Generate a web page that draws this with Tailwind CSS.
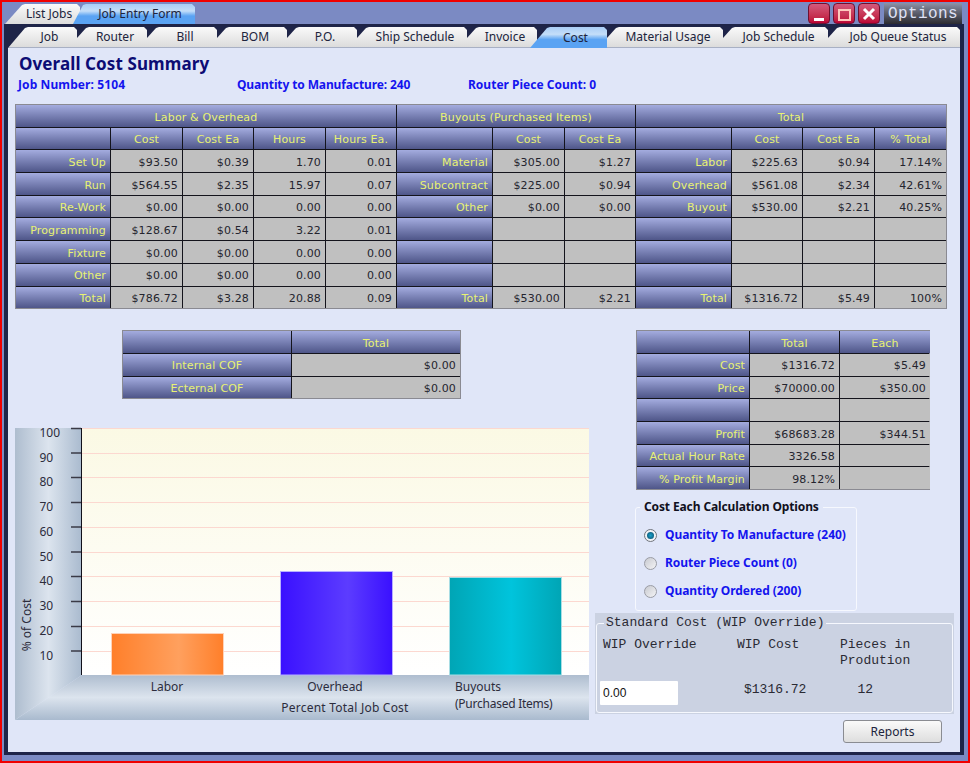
<!DOCTYPE html>
<html lang="en">
<head>
  <meta charset="UTF-8" />
  <title>Overall Cost Summary</title>
  <script src="https://cdn.jsdelivr.net/npm/@tailwindcss/browser@4"></script>
</head>
<body class="w-[970px] h-[763px] overflow-hidden border-2 border-[#f00000] bg-[#7b8ac3] font-['Noto_Sans',sans-serif] text-[12px]">

  <!-- Top bar -->
  <div class="h-[22px] flex items-end pl-[3px] pr-[6px]">
    <div class="w-[75px] h-[20px] flex items-center justify-center pl-[13px] text-[#20243c] bg-linear-to-b from-[#fafafa] to-[#dcdcdc] [clip-path:polygon(0_100%,17px_1px,20px_0,calc(100%-3px)_0,100%_3px,100%_100%)]">List Jobs</div>
    <div class="w-[122px] h-[20px] -ml-[7px] flex items-center justify-center pl-[12px] text-[#20243c] bg-[linear-gradient(#a9cdf6_0,#c4def9_35%,#5aa3f3_60%,#5aa3f3_100%)] [clip-path:polygon(0_100%,10px_1px,13px_0,calc(100%-3px)_0,100%_3px,100%_100%)]">Job Entry Form</div>
    <div class="ml-auto flex items-start gap-[3px] h-[22px] pt-[1px]">
      <button class="w-[22px] h-[21px] rounded-[4px] border border-[#6e1030] bg-linear-to-b from-[#d4587c] to-[#bc0036] flex items-end justify-center pb-[2px]"><span class="block w-[10px] h-[3px] bg-[#fff]"></span></button>
      <button class="w-[22px] h-[21px] rounded-[4px] border border-[#6e1030] bg-linear-to-b from-[#d4587c] to-[#bc0036] flex items-center justify-center"><span class="block w-[13px] h-[12px] mt-[3px] border-2 border-[#ffc9bd]"></span></button>
      <button class="w-[22px] h-[21px] rounded-[4px] border border-[#6e1030] bg-linear-to-b from-[#d4587c] to-[#bc0036] flex items-center justify-center">
        <svg width="14" height="14" viewBox="0 0 14 14"><path d="M2 2 L12 12 M12 2 L2 12" stroke="#fff" stroke-width="3" fill="none" /></svg>
      </button>
      <div class="w-[78px] h-[21px] ml-[1px] flex items-center justify-center bg-linear-to-b from-[#8d92a8] to-[#2c2c32] text-[#dfe2f6] font-['Liberation_Mono',monospace] text-[16px] tracking-[0.4px]">Options</div>
    </div>
  </div>

  <!-- Frame -->
  <div class="ml-[2px] w-[960px] h-[731px] bg-[#1e2448] pt-[3px] px-[4px] pb-[3px]">

    <!-- Tabs -->
    <div class="flex h-[21px] text-[#20243c]">
      <div class="w-[69px] flex items-center justify-center pl-[14px] bg-linear-to-b from-[#fafafa] to-[#dcdcdc] border-b border-[#a8b0c4] [clip-path:polygon(0_100%,17px_1px,20px_0,calc(100%-3px)_0,100%_3px,100%_100%)]">Job</div>
      <div class="w-[70px] flex items-center justify-center pl-[6px] bg-linear-to-b from-[#fafafa] to-[#dcdcdc] border-b border-[#a8b0c4] [clip-path:polygon(0_100%,0_11px,9px_1px,12px_0,calc(100%-3px)_0,100%_3px,100%_100%)]">Router</div>
      <div class="w-[70px] flex items-center justify-center pl-[6px] bg-linear-to-b from-[#fafafa] to-[#dcdcdc] border-b border-[#a8b0c4] [clip-path:polygon(0_100%,0_11px,9px_1px,12px_0,calc(100%-3px)_0,100%_3px,100%_100%)]">Bill</div>
      <div class="w-[70px] flex items-center justify-center pl-[6px] bg-linear-to-b from-[#fafafa] to-[#dcdcdc] border-b border-[#a8b0c4] [clip-path:polygon(0_100%,0_11px,9px_1px,12px_0,calc(100%-3px)_0,100%_3px,100%_100%)]">BOM</div>
      <div class="w-[70px] flex items-center justify-center pl-[6px] bg-linear-to-b from-[#fafafa] to-[#dcdcdc] border-b border-[#a8b0c4] [clip-path:polygon(0_100%,0_11px,9px_1px,12px_0,calc(100%-3px)_0,100%_3px,100%_100%)]">P.O.</div>
      <div class="w-[110px] flex items-center justify-center pl-[6px] bg-linear-to-b from-[#fafafa] to-[#dcdcdc] border-b border-[#a8b0c4] [clip-path:polygon(0_100%,0_11px,9px_1px,12px_0,calc(100%-3px)_0,100%_3px,100%_100%)]">Ship Schedule</div>
      <div class="w-[70px] flex items-center justify-center pl-[6px] bg-linear-to-b from-[#fafafa] to-[#dcdcdc] border-b border-[#a8b0c4] [clip-path:polygon(0_100%,0_11px,9px_1px,12px_0,calc(100%-3px)_0,100%_3px,100%_100%)]">Invoice</div>
      <div class="w-[77px] -ml-[7px] flex items-center justify-center pl-[14px] bg-[linear-gradient(#a9cdf6_0,#c4def9_35%,#5aa3f3_60%,#5aa3f3_100%)] [clip-path:polygon(0_100%,17px_1px,20px_0,calc(100%-3px)_0,100%_3px,100%_100%)]">Cost</div>
      <div class="w-[116px] flex items-center justify-center pl-[6px] bg-linear-to-b from-[#fafafa] to-[#dcdcdc] border-b border-[#a8b0c4] [clip-path:polygon(0_100%,0_11px,9px_1px,12px_0,calc(100%-3px)_0,100%_3px,100%_100%)]">Material Usage</div>
      <div class="w-[105px] flex items-center justify-center pl-[6px] bg-linear-to-b from-[#fafafa] to-[#dcdcdc] border-b border-[#a8b0c4] [clip-path:polygon(0_100%,0_11px,9px_1px,12px_0,calc(100%-3px)_0,100%_3px,100%_100%)]">Job Schedule</div>
      <div class="w-[132px] flex items-center justify-center pl-[8px] bg-linear-to-b from-[#fafafa] to-[#dcdcdc] border-b border-[#a8b0c4] [clip-path:polygon(0_100%,0_11px,9px_1px,12px_0,calc(100%-3px)_0,100%_3px,100%_100%)]">Job Queue Status</div>
    </div>

    <!-- Content -->
    <div class="h-[704px] bg-[#e0e6f8] pl-[7px] pt-[4px]">
      <h1 class="ml-[4px] text-[17px] leading-[24px] font-bold tracking-[0.1px] text-[#0c0c74]">Overall Cost Summary</h1>
      <div class="ml-[3px] mt-[1px] flex leading-[16px] font-bold text-[#1414ee]">
        <span class="w-[219px] tracking-[0.1px]">Job Number: 5104</span>
        <span class="w-[231px] tracking-[-0.12px]">Quantity to Manufacture: 240</span>
        <span>Router Piece Count: 0</span>
      </div>

      <!-- Cost breakdown -->
      <div id="mainGrid" class="mt-[11px] w-[932px] border border-[#8a8a92] bg-[#14141c] grid gap-px grid-cols-[94px_71px_70px_71px_70px_95px_71px_70px_95px_70px_71px_71px] grid-rows-[repeat(9,21.7px)] font-['DejaVu_Sans',sans-serif] text-[11px] tracking-[0.15px]"></div>

      <div class="flex mt-[21px]">
        <div class="w-[574px]">
          <!-- COF -->
          <div id="cofGrid" class="ml-[107px] w-[339px] border border-[#8a8a92] bg-[#14141c] grid gap-px grid-cols-[168px_168px] grid-rows-[repeat(3,21.7px)] font-['DejaVu_Sans',sans-serif] text-[11px] tracking-[0.15px]"></div>

          <!-- Chart -->
          <svg class="mt-[29px] block overflow-visible" width="574" height="292" viewBox="0 0 574 292">
            <defs>
              <linearGradient id="wall" x1="0" x2="1" y1="0" y2="0">
                <stop offset="0" stop-color="#aebdcf" /><stop offset="0.5" stop-color="#dce4ee" /><stop offset="1" stop-color="#a9bace" />
              </linearGradient>
              <linearGradient id="floor" x1="0" x2="0" y1="0" y2="1">
                <stop offset="0" stop-color="#aebdcf" /><stop offset="0.5" stop-color="#dce4ee" /><stop offset="1" stop-color="#a9bace" />
              </linearGradient>
              <linearGradient id="plot" x1="0" x2="0" y1="0" y2="1">
                <stop offset="0" stop-color="#fbf9e4" /><stop offset="1" stop-color="#ffffff" />
              </linearGradient>
              <linearGradient id="orange" x1="0" x2="1" y1="0" y2="0">
                <stop offset="0" stop-color="#ff7f2a" /><stop offset="0.6" stop-color="#ffa05e" /><stop offset="1" stop-color="#ff7f2a" />
              </linearGradient>
              <linearGradient id="purple" x1="0" x2="1" y1="0" y2="0">
                <stop offset="0" stop-color="#3a10ff" /><stop offset="0.6" stop-color="#5c3cff" /><stop offset="1" stop-color="#3a10ff" />
              </linearGradient>
              <linearGradient id="teal" x1="0" x2="1" y1="0" y2="0">
                <stop offset="0" stop-color="#00a5b5" /><stop offset="0.55" stop-color="#00c4dc" /><stop offset="1" stop-color="#00a5b5" />
              </linearGradient>
            </defs>
            <polygon points="0,292 67,247 574,247 574,292" fill="url(#floor)" />
            <polygon points="0,0 67,0 67,247 0,292" fill="url(#wall)" />
            <rect x="67" y="0" width="507" height="247" fill="url(#plot)" />
            <g stroke="#fcd8d0" stroke-width="1">
              <line x1="67" x2="574" y1="0.5" y2="0.5" /><line x1="67" x2="574" y1="25.5" y2="25.5" />
              <line x1="67" x2="574" y1="49.5" y2="49.5" /><line x1="67" x2="574" y1="74.5" y2="74.5" />
              <line x1="67" x2="574" y1="99.5" y2="99.5" /><line x1="67" x2="574" y1="124.5" y2="124.5" />
              <line x1="67" x2="574" y1="148.5" y2="148.5" /><line x1="67" x2="574" y1="173.5" y2="173.5" />
              <line x1="67" x2="574" y1="198.5" y2="198.5" /><line x1="67" x2="574" y1="223.5" y2="223.5" />
            </g>
            <g stroke="#3a3a46" stroke-width="1.5">
              <line x1="56" x2="66" y1="0.5" y2="0.5" /><line x1="56" x2="66" y1="25" y2="25" />
              <line x1="56" x2="66" y1="49.5" y2="49.5" /><line x1="56" x2="66" y1="74.5" y2="74.5" />
              <line x1="56" x2="66" y1="99" y2="99" /><line x1="56" x2="66" y1="124" y2="124" />
              <line x1="56" x2="66" y1="148.5" y2="148.5" /><line x1="56" x2="66" y1="173.5" y2="173.5" />
              <line x1="56" x2="66" y1="198.5" y2="198.5" /><line x1="56" x2="66" y1="223" y2="223" />
            </g>
            <line x1="66.5" x2="66.5" y1="0" y2="247" stroke="#10101a" stroke-width="1" />
            <rect x="96.5" y="205.5" width="112" height="41.5" fill="url(#orange)" stroke="#ffd2b8" />
            <rect x="265.5" y="143.5" width="112" height="103.5" fill="url(#purple)" stroke="#b8b0ff" />
            <rect x="434.5" y="149.5" width="112" height="97.5" fill="url(#teal)" stroke="#a8dde4" />
            <g fill="#2c2c3c" font-size="12" font-family="'Noto Sans', sans-serif">
              <text x="24.5" y="9">100</text><text x="24.5" y="34">90</text><text x="24.5" y="58">80</text>
              <text x="24.5" y="83">70</text><text x="24.5" y="108">60</text><text x="24.5" y="133">50</text>
              <text x="24.5" y="157">40</text><text x="24.5" y="182">30</text><text x="24.5" y="207">20</text>
              <text x="24.5" y="232">10</text>
              <text x="0" y="0" text-anchor="middle" transform="translate(16 197) rotate(-90)">% of Cost</text>
              <text x="152" y="263" text-anchor="middle">Labor</text>
              <text x="320" y="263" text-anchor="middle">Overhead</text>
              <text x="440" y="263">Buyouts</text>
              <text x="440" y="280" letter-spacing="-0.25">(Purchased Items)</text>
              <text x="330" y="284" text-anchor="middle" letter-spacing="0.22">Percent Total Job Cost</text>
            </g>
          </svg>
        </div>

        <div class="ml-[6px] w-[359px]">
          <!-- Price summary -->
          <div id="priceGrid" class="ml-[41px] w-[294px] border border-[#8a8a92] bg-[#14141c] grid gap-px grid-cols-[112px_89px_90px] grid-rows-[repeat(7,21.7px)] font-['DejaVu_Sans',sans-serif] text-[11px] tracking-[0.15px]"></div>

          <!-- Calculation options -->
          <fieldset class="ml-[40px] mt-[10px] w-[222px] h-[111px] border border-[#f6f8fe] rounded-[3px] pl-[8px]">
            <legend class="-ml-[4px] px-[4px] leading-[14px] font-bold tracking-[-0.12px] text-[#101020]">Cost Each Calculation Options</legend>
            <div class="mt-[13px] flex flex-col gap-[12px] font-bold tracking-[-0.05px] text-[#1414ee] leading-[16px]">
              <label class="flex items-center gap-[8px]">
                <span class="w-[13px] h-[13px] rounded-full border border-[#70747c] bg-[#f0f2f6] flex items-center justify-center"><span class="block w-[7px] h-[7px] rounded-full bg-[radial-gradient(#1aa0c8,#0c4a6a)]"></span></span>
                Quantity To Manufacture (240)
              </label>
              <label class="flex items-center gap-[8px]">
                <span class="w-[13px] h-[13px] rounded-full border border-[#9a9ca4] bg-linear-to-br from-[#c8cad0] to-[#f4f4f6]"></span>
                Router Piece Count (0)
              </label>
              <label class="flex items-center gap-[8px]">
                <span class="w-[13px] h-[13px] rounded-full border border-[#9a9ca4] bg-linear-to-br from-[#c8cad0] to-[#f4f4f6]"></span>
                Quantity Ordered (200)
              </label>
            </div>
          </fieldset>

          <!-- Standard cost -->
          <div class="mt-[2px] h-[101px] bg-[#cbd2e2] px-[1px] pt-[2px] font-['Liberation_Mono',monospace] text-[13px] text-[#2a2a34]">
            <fieldset class="h-[98px] border border-[#f6f8fe] rounded-[3px] pl-[6px]">
              <legend class="ml-[1px] px-[2px] leading-[16px]">Standard Cost (WIP Override)</legend>
              <div class="flex leading-[16px] mt-[6px]">
                <span class="w-[134px]">WIP Override</span>
                <span class="w-[103px]">WIP Cost</span>
                <span>Pieces in<br />Prodution</span>
              </div>
              <div class="flex items-center mt-[12px]">
                <input type="text" value="0.00" class="w-[78px] h-[24px] -ml-[3px] bg-[#fff] pl-[3px] rounded-[1px] font-['Liberation_Sans',sans-serif] text-[12px] text-[#111]" />
                <span class="ml-[66px] -mt-[7px]">$1316.72</span>
                <span class="ml-[51px] -mt-[7px]">12</span>
              </div>
            </fieldset>
          </div>

          <button class="block ml-[248px] mt-[6px] w-[99px] h-[23px] rounded-[3px] border border-[#8a8c92] bg-linear-to-b from-[#fafafa] to-[#dedede] text-[#20243c]">Reports</button>
        </div>
      </div>
    </div>
  </div>

<script>
  const headCell = "flex items-center justify-center pt-[4px] bg-linear-to-b from-[#a4acdf] to-[#4f5689] text-[#e8f272]";
  const labelCell = "flex items-center justify-end pt-[4px] pr-[4px] bg-linear-to-b from-[#a4acdf] to-[#4f5689] text-[#e8f272]";
  const valueCell = "flex items-center justify-end pt-[4px] pr-[4px] bg-[#c0c0c0] text-[#24242e]";

  function addCell(grid, cls, text, extra) {
    const cell = document.createElement("div");
    cell.className = cls + (extra ? " " + extra : "");
    cell.textContent = text;
    grid.appendChild(cell);
  }

  // label columns in the 12 column table
  const labelCols = [0, 5, 8];
  const main = document.getElementById("mainGrid");
  addCell(main, headCell, "Labor & Overhead", "col-span-5");
  addCell(main, headCell, "Buyouts (Purchased Items)", "col-span-3");
  addCell(main, headCell, "Total", "col-span-4");
  ["", "Cost", "Cost Ea", "Hours", "Hours Ea.", "", "Cost", "Cost Ea", "", "Cost", "Cost Ea", "% Total"]
    .forEach(t => addCell(main, headCell, t));
  [
    ["Set Up", "$93.50", "$0.39", "1.70", "0.01", "Material", "$305.00", "$1.27", "Labor", "$225.63", "$0.94", "17.14%"],
    ["Run", "$564.55", "$2.35", "15.97", "0.07", "Subcontract", "$225.00", "$0.94", "Overhead", "$561.08", "$2.34", "42.61%"],
    ["Re-Work", "$0.00", "$0.00", "0.00", "0.00", "Other", "$0.00", "$0.00", "Buyout", "$530.00", "$2.21", "40.25%"],
    ["Programming", "$128.67", "$0.54", "3.22", "0.01", "", "", "", "", "", "", ""],
    ["Fixture", "$0.00", "$0.00", "0.00", "0.00", "", "", "", "", "", "", ""],
    ["Other", "$0.00", "$0.00", "0.00", "0.00", "", "", "", "", "", "", ""],
    ["Total", "$786.72", "$3.28", "20.88", "0.09", "Total", "$530.00", "$2.21", "Total", "$1316.72", "$5.49", "100%"],
  ].forEach(row => row.forEach((t, i) => addCell(main, labelCols.includes(i) ? labelCell : valueCell, t)));

  const cof = document.getElementById("cofGrid");
  addCell(cof, headCell, "");
  addCell(cof, headCell, "Total");
  addCell(cof, headCell, "Internal COF");
  addCell(cof, valueCell, "$0.00");
  addCell(cof, headCell, "Ecternal COF");
  addCell(cof, valueCell, "$0.00");

  const price = document.getElementById("priceGrid");
  ["", "Total", "Each"].forEach(t => addCell(price, headCell, t));
  [
    ["Cost", "$1316.72", "$5.49"],
    ["Price", "$70000.00", "$350.00"],
    ["", "", ""],
    ["Profit", "$68683.28", "$344.51"],
    ["Actual Hour Rate", "3326.58", ""],
    ["% Profit Margin", "98.12%", ""],
  ].forEach(row => row.forEach((t, i) => addCell(price, i === 0 ? labelCell : valueCell, t)));
</script>
</body>
</html>
